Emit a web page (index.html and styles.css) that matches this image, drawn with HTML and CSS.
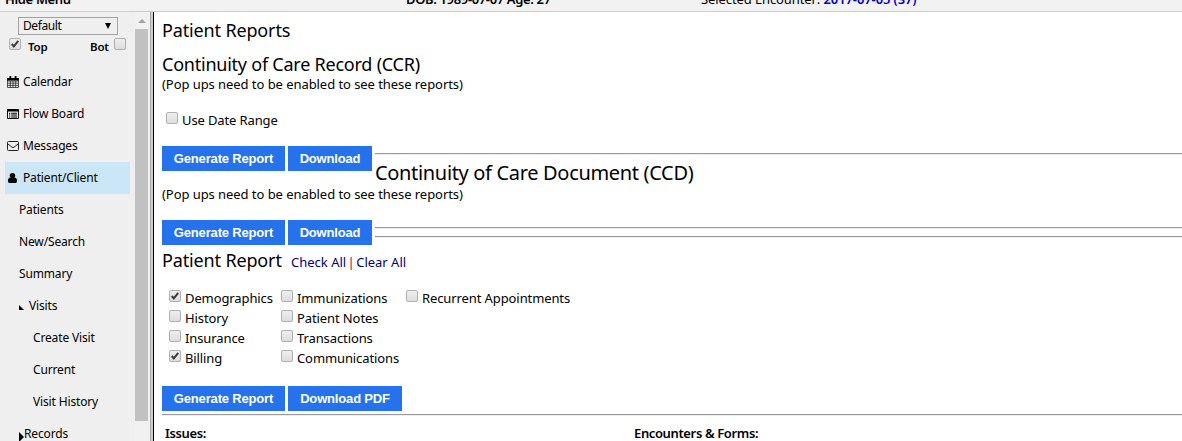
FILE: index.html
```html
<!DOCTYPE html>
<html lang="en">
<head>
<meta charset="utf-8">
<title>Patient Reports</title>
<link rel="stylesheet" href="styles.css">
</head>
<body>
<header class="topbar">
  <span class="hide-menu">Hide Menu</span>
  <span class="dob">DOB: 1989-07-07 Age: 27</span>
  <span class="encounter">Selected Encounter: <b>2017-07-05 (37)</b></span>
</header>
<div class="frames">
  <nav class="sidebar">
    <div class="select"><span>Default</span><i class="caret"></i></div>
    <div class="toggles">
      <i class="box checked"><svg viewBox="0 0 13 13"><path d="M3 6.5 L5.2 9 L10 3"/></svg></i><b class="top">Top</b><b class="bot">Bot</b><i class="box"></i>
    </div>
    <ul class="menu">
      <li><svg class="icon" viewBox="0 0 12 12"><path d="M.5 2.5h11v9H.5zM.5 5h11M.5 7.2h11M.5 9.4h11M3.3 5v6.5M6 5v6.5M8.7 5v6.5" fill="none" stroke="#111" stroke-width=".7"/><path d="M0 2h12v2.5H0zM2.500 0h1.800v3H2.500zM7.700 0h1.800v3H7.700z"/></svg><span>Calendar</span></li>
      <li><svg class="icon" viewBox="0 0 12 12"><path d="M.5 1.500h11v9H.5z" fill="none" stroke="#111"/><path d="M0 1h12v2.500H0zM2 4.800h1.300v1H2zM4.200 4.800H10v1H4.200zM2 6.600h1.300v1H2zM4.200 6.600H10v1H4.200zM2 8.400h1.300v1H2zM4.200 8.400H10v1H4.200z"/></svg><span>Flow Board</span></li>
      <li><svg class="icon" viewBox="0 0 12 12"><rect x=".5" y="1.500" width="11" height="9" rx="1" fill="none" stroke="#222"/><path d="M.7 3.800 5 7.200q1 .7 2 0l4.300-3.400" fill="none" stroke="#222"/></svg><span>Messages</span></li>
      <li class="active"><svg class="icon" viewBox="0 0 12 12"><circle cx="5.500" cy="3.600" r="2.700"/><path d="M1 9q0-3.500 2.300-3.500 2.200 1.600 4.400 0Q10 5.500 10 9q0 2-1.500 2h-6Q1 11 1 9z"/></svg><span>Patient/Client</span></li>
      <li class="sub"><span>Patients</span></li>
      <li class="sub"><span>New/Search</span></li>
      <li class="sub"><span>Summary</span></li>
      <li class="sub"><svg class="open" viewBox="0 0 5 5"><path d="M0 0v5h5z"/></svg><span>Visits</span></li>
      <li class="leaf"><span>Create Visit</span></li>
      <li class="leaf"><span>Current</span></li>
      <li class="leaf"><span>Visit History</span></li>
      <li class="sub"><svg class="closed" viewBox="0 0 5 10"><path d="M0 0v10l5-5z"/></svg><span>Records</span></li>
    </ul>
  </nav>
  <div class="scrollbar"><i class="up"></i><i class="thumb"></i></div>
  <div class="divider"></div>
  <main class="content">
    <h1 class="title">Patient Reports</h1>
    <h2 class="title ccr">Continuity of Care Record (CCR)</h2>
    <p class="note">(Pop ups need to be enabled to see these reports)</p>
    <label class="range"><i class="box"></i><span>Use Date Range</span></label>
    <div class="actions">
      <button class="generate">Generate Report</button><button class="download">Download</button>
      <div class="beside"><hr><h2 class="title ccd">Continuity of Care Document (CCD)</h2></div>
    </div>
    <p class="note second">(Pop ups need to be enabled to see these reports)</p>
    <div class="actions">
      <button class="generate">Generate Report</button><button class="download">Download</button>
      <div class="beside"><hr><hr></div>
    </div>
    <div class="report-head"><h2 class="title">Patient Report</h2><div class="links"><a>Check All</a><em>|</em><a>Clear All</a></div></div>
    <div class="checks">
      <label><i class="box checked"><svg viewBox="0 0 13 13"><path d="M3 6.500 L5.200 9 L10 3"/></svg></i><span>Demographics</span></label><label><i class="box"></i><span>Immunizations</span></label><label><i class="box"></i><span>Recurrent Appointments</span></label>
      <label><i class="box"></i><span>History</span></label><label class="wide"><i class="box"></i><span>Patient Notes</span></label>
      <label><i class="box"></i><span>Insurance</span></label><label class="wide"><i class="box"></i><span>Transactions</span></label>
      <label><i class="box checked"><svg viewBox="0 0 13 13"><path d="M3 6.500 L5.200 9 L10 3"/></svg></i><span>Billing</span></label><label class="wide"><i class="box"></i><span>Communications</span></label>
    </div>
    <div class="actions"><button class="generate">Generate Report</button><button class="download-pdf">Download PDF</button></div>
    <hr class="full">
    <div class="columns"><b>Issues:</b><b>Encounters &amp; Forms:</b></div>
  </main>
</div>
</body>
</html>
```
FILE: styles.css
```css
* { box-sizing: border-box; }
body { margin: 0; height: 441px; overflow: hidden; background: #fff; color: #000; font: 13px/16px "Noto Sans", sans-serif; }
.topbar { height: 12px; background: #f2f2f2; border-bottom: 1px solid #cdcdcd; display: grid; grid-template-columns: 401px 295px 1fr; padding-left: 5px; overflow: hidden; white-space: nowrap; align-items: start; }
.topbar > span { margin-top: -9px; height: 16px; font-weight: 600; letter-spacing: -.35px; }
.topbar > .encounter { font-weight: 400; letter-spacing: -.1px; }
.encounter b { color: #00c; font-weight: 600; }
.frames { display: flex; height: 429px; }
.sidebar { width: 135px; background: #efefef; overflow: hidden; font-size: 12px; letter-spacing: -.15px; white-space: nowrap; }
.select { margin: 5px 0 0 18px; width: 100px; height: 18px; border: 1px solid #a3a3a3; display: flex; align-items: center; justify-content: space-between; padding: 0 6px 0 4px; letter-spacing: -.4px; }
.caret { border: 3px solid transparent; border-top: 6px solid #000; border-bottom: 0; }
.toggles { display: flex; height: 20px; padding: 3px 0 0 9px; }
.toggles b { font-size: 11.500px; line-height: 18px; font-weight: 600; }
.top { margin-left: 7px; width: 62px; }
.bot { width: 24px; }
.box { display: block; flex: none; width: 12px; height: 12px; border: 1px solid #b0b0b0; border-radius: 2px; background: linear-gradient(#eee, #ddd); }
.checked svg { display: block; width: 12px; height: 12px; margin: -1px; }
.checked path { fill: none; stroke: #3c3c3c; stroke-width: 2.200; }
.menu { list-style: none; margin: 11px 5px 0; padding: 0; }
.menu li { height: 32px; line-height: 32px; display: flex; align-items: center; padding-left: 2px; }
.menu .active { background: #cae6f7; }
.icon { width: 12px; height: 12px; margin-right: 4px; }
.menu .sub { padding-left: 14px; }
.menu .leaf { padding-left: 28px; }
.open { width: 5px; height: 5px; margin: 3px 5px 0 0; }
.closed { width: 5px; height: 10px; margin-top: 6px; }
.scrollbar { width: 15px; background: #f1f1f1; }
.up { display: block; margin: 7px 3px 0; border: 4px solid transparent; border-bottom: 4px solid #a3a3a3; border-top: 0; width: 8px; }
.thumb { display: block; width: 13px; height: 392px; margin-top: 6px; background: #c1c1c1; }
.divider { width: 4px; background: #d0d0d0; border-right: 1px solid #000; border-left: 1px solid #aaa; }
.content { flex: 1; padding: 6px 0 0 8px; white-space: nowrap; overflow: hidden; }
.title { margin: 0; padding-top: 1px; font-size: 18px; line-height: 23px; font-weight: 400; letter-spacing: -.15px; }
.ccr { margin-top: 10px; letter-spacing: -.23px; }
.ccd { margin-top: 5px; font-size: 20px; letter-spacing: -.33px; }
.note { margin: 0; letter-spacing: -.06px; }
.second { margin-top: 2px; }
.range { display: flex; margin-top: 20px; padding-left: 4px; gap: 4px; letter-spacing: -.12px; }
.actions { display: flex; align-items: flex-start; gap: 3px; margin-top: 18px; }
button { height: 25px; padding: 0; border: 0; background: #2672ec; color: #fff; font: bold 13px "Liberation Sans", sans-serif; letter-spacing: -.17px; }
.generate { width: 123px; }
.download { width: 84px; }
.download-pdf { width: 114px; }
.beside { flex: 1; }
hr { height: 2px; margin: 7px 0 0; border: 0; border-top: 1px solid #999; background: #eee; }
.report-head { display: flex; margin-top: 3px; }
.report-head .title { width: 129px; }
.links { display: flex; padding-top: 6px; }
.links a { color: #000080; }
.links em { width: 10px; text-align: center; color: #a04; font-style: normal; }
.checks { display: grid; grid-template-columns: 112px 125px 1fr; grid-auto-rows: 20px; line-height: 20px; margin: 16px 0 0 7px; letter-spacing: -.1px; }
.checks label { display: flex; gap: 4px; }
.checks .wide { grid-column: 2 / 4; }
.checks .box { margin-top: 2px; }
.full { margin-top: 3px; }
.columns { display: grid; grid-template-columns: 469px 1fr; margin: 9px 0 0 3px; letter-spacing: -.37px; }
.columns b { font-weight: 600; }
```
